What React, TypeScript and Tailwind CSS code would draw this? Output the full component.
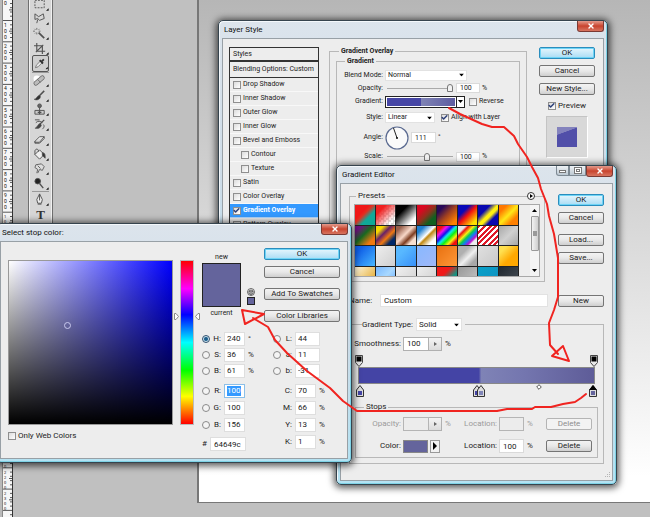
import { Check, X } from "lucide-react";
import type { ReactNode } from "react";

const tools = {
  selection: [
    <path key="m" d="M3 2.5h10v8H3z" strokeDasharray="2 1.3" />,
    <path key="l" d="M3 2l4 3 5-3 1 5-5 2-2-2-3 1zM6 8l-1 4" />,
    <g key="w">
      <path d="M7 6l6 6" strokeWidth="1.8" />
      <path d="M5 1v2M5 6v2M1 4.500h2M7 4.500h2M2.500 2l1 1M8 2L7 3M3 7l1-1" strokeWidth=".8" />
    </g>,
    <path key="c" d="M5 1v9h9M2 4h9v9M4 11l8-8" strokeWidth="1.200" />,
    <g key="e">
      <path d="M3 12l1-3 5-5 2 2-5 5z" fill="#eee" strokeWidth=".8" />
      <path d="M8 3l4 4M10 5l3-3" stroke="#333" strokeWidth="2.200" />
    </g>,
  ],
  paint: [
    <g key="h">
      <circle cx="5" cy="5" r="3.500" fill="#fff" stroke="none" />
      <path d="M4 10l7-6" stroke="#666" strokeWidth="5" strokeLinecap="round" />
      <path d="M4 10l7-6" stroke="#bbb" strokeWidth="3.400" strokeLinecap="round" />
      <path d="M6 6l3 3" strokeWidth=".7" />
    </g>,
    <g key="b">
      <path d="M13 2L7 8" strokeWidth="1.600" />
      <path d="M8 7c-3 0-3 4-6 4 3 2 7 0 7-3z" fill="#333" strokeWidth=".5" />
    </g>,
    <g key="s">
      <circle cx="8" cy="3" r="2" fill="#666" />
      <path d="M8 5v3M3 8h10v4H3z" fill="#ccc" />
      <path d="M6 10h4M8 8v4" strokeWidth="1.400" />
    </g>,
    <g key="hi">
      <path d="M13 2L8 7" strokeWidth="1.400" />
      <path d="M9 6c-3 0-3 4-6 5 3 1 6 0 7-3z" fill="#444" strokeWidth=".5" />
      <path d="M3 2h5M4 5c2-2 5-2 7 0M12 7c2 2 0 4-1 5" />
    </g>,
    <path key="er" d="M3 9l5-5h5l-5 6H3zM3 9v2h5l5-5V4" fill="#eee" />,
    <g key="bu">
      <path d="M3 7l5-5 5 5-5 5z" fill="#eee" />
      <path d="M3 7V3c1-3 4-2 4 1" />
      <path d="M11 5c3 0 3 3 3 6l-3-3z" fill="#333" />
    </g>,
    <path key="sm" d="M5 12l1-4-3-2 1-3 6-1 3 3-2 4-3-1-2 4M6 4l3 3" fill="#ddd" strokeWidth=".9" />,
    <g key="d">
      <circle cx="6" cy="4.500" r="3" fill="#222" />
      <path d="M8 7l4 5" strokeWidth="1.400" />
    </g>,
  ],
};

// background of each preset, row by row
const presets = [
  "linear-gradient(135deg,#f01818 35%,#e03020 45%,#10a898 65%)",
  "linear-gradient(135deg,#f02020 25%,transparent 80%),repeating-conic-gradient(#ddd 0 25%,#fff 0 50%) 0 0/5px 5px",
  "linear-gradient(135deg,#000 30%,#fff 80%)",
  "linear-gradient(135deg,#d80820 25%,#90301c 50%,#106020 75%)",
  "linear-gradient(135deg,#280858 20%,#a04020 50%,#ff8000 85%)",
  "linear-gradient(135deg,#0808b8 30%,#f01010 50%,#ffe000 85%)",
  "linear-gradient(135deg,#0808b0 30%,#fff010 50%,#fff010 58%,#0808b0 72%)",
  "linear-gradient(135deg,#ff7800 20%,#ffe818 50%,#ff8000 75%)",
  "linear-gradient(135deg,#701080 15%,#186820 45%,#f07810 80%)",
  "linear-gradient(135deg,#f8d800 20%,#682068 40%,#f07810 60%,#002868 80%)",
  "linear-gradient(135deg,#98604c 15%,#f8d8c8 45%,#7c3c20 65%,#f8e0d0 80%)",
  "linear-gradient(135deg,#2080d0 20%,#fff 48%,#c08810 56%,#fff 80%)",
  "linear-gradient(135deg,#f01010 15%,#f010f0 27%,#1010f0 40%,#10e8f0 50%,#10f010 62%,#f8f010 75%,#f01010 87%)",
  "linear-gradient(135deg,#e8e8e8 20%,#f01010 28%,#f8f010 42%,#10c850 53%,#1080f0 63%,#c010d0 75%,#eee 82%)",
  "repeating-linear-gradient(135deg,#e01828 0 2px,#fff 2px 4px)",
  "linear-gradient(135deg,#a8a8a8,#d0d0d0 50%,#a8a8a8)",
  "linear-gradient(135deg,#1060e8 20%,#48b8ff)",
  "linear-gradient(135deg,#eee,#d0d0d0)",
  "linear-gradient(135deg,#58b8ff 30%,#3890f8)",
  "linear-gradient(135deg,#88b8ff,#a0b8f8)",
  "linear-gradient(135deg,#e87010,#ff9838)",
  "linear-gradient(135deg,#b0b0b0 30%,#f0f0f0 55%,#a8a8a8 80%)",
  "linear-gradient(135deg,#e0e0e0,#c8c8c8)",
  "linear-gradient(135deg,#ffe050 20%,#ffa800 60%)",
  "linear-gradient(135deg,#fff8e0,#e8b850 70%)",
  "linear-gradient(135deg,#78b8ff,#a8d8ff 50%,#60a8ff)",
  "linear-gradient(135deg,#f0f0f0,#d0d0d0)",
  "linear-gradient(135deg,#eee,#ccc)",
  "linear-gradient(135deg,#f01818 35%,#189080 65%)",
  "linear-gradient(135deg,#989898,#c8c8c8)",
  "linear-gradient(135deg,#08a0c8,#1090c0)",
  "linear-gradient(135deg,#202830,#485058)",
];

const effects = [
  { name: "Drop Shadow" },
  { name: "Inner Shadow" },
  { name: "Outer Glow" },
  { name: "Inner Glow" },
  { name: "Bevel and Emboss" },
  { name: "Contour", nested: true },
  { name: "Texture", nested: true },
  { name: "Satin" },
  { name: "Color Overlay" },
  { name: "Gradient Overlay", active: true },
  { name: "Pattern Overlay" },
];

function DesktopWindow({
  title,
  place,
  controls,
  children,
}: {
  title: string;
  place: string;
  controls?: boolean;
  children: ReactNode;
}) {
  return (
    <section
      className={`absolute flex flex-col rounded-[5px] border border-[#36444e] bg-linear-to-b from-[#dce4ec] via-[#cddce8] to-[#b4e2f2] px-[3px] pb-[3px] shadow-[0_1px_7px_2px_rgba(0,0,0,0.65),inset_-1px_0_0_#7fd3e6,inset_0_-1px_0_#7fd3e6,inset_1px_1px_0_#f4f8fb] ${place}`}
    >
      <header className="flex h-[17px] shrink-0 items-start justify-between">
        <h2 className="pl-[2px] text-[8px] leading-[17px] text-[#111]">{title}</h2>
        <div className="flex">
          {controls && (
            <>
              <button
                aria-label="Minimize"
                className="flex h-[10px] w-[13px] items-end justify-center rounded-bl-[3px] border border-t-0 border-[#7d8993] bg-linear-to-b from-[#eef2f5] to-[#bcc8d2] pb-[2px]"
              >
                <span className="h-[3px] w-[7px] border border-[#777] bg-white" />
              </button>
              <button
                aria-label="Maximize"
                className="flex h-[10px] w-[17px] items-center justify-center border border-t-0 border-[#7d8993] bg-linear-to-b from-[#eef2f5] to-[#bcc8d2]"
              >
                <span className="flex h-[7px] w-2 items-center justify-center border border-[#777] bg-white">
                  <span className="h-[3px] w-1 border border-[#777]" />
                </span>
              </button>
            </>
          )}
          <button
            aria-label="Close"
            className="flex h-[11px] w-[27px] items-center justify-center rounded-b-[3px] border border-t-0 border-[#7b3a34] bg-linear-to-b from-[#e39a8c] via-[#c8432e] to-[#d77460] text-white"
          >
            <X size={8} strokeWidth={4} />
          </button>
        </div>
      </header>
      <div className="min-h-0 flex-1 overflow-hidden border border-[#98a0a6] bg-[#ededed]">{children}</div>
    </section>
  );
}

function PushButton({ children, primary, disabled }: { children: ReactNode; primary?: boolean; disabled?: boolean }) {
  const tone = primary
    ? "border-[#2a8dbd] bg-linear-to-b from-[#e6f6fd] to-[#a9dcf4] shadow-[inset_0_0_0_1px_#6fd4f6]"
    : disabled
      ? "border-[#b4b4b4] bg-[#f3f3f3] text-[#8d8d8d]"
      : "border-[#757575] bg-linear-to-b from-[#f3f3f3] via-[#e8e8e8] to-[#cfcfcf]";
  return (
    <button disabled={disabled} className={`h-3 w-full rounded-[2px] border text-center text-[8px] leading-[10px] ${tone}`}>
      {children}
    </button>
  );
}

function Tick({ label, on, className = "" }: { label: string; on?: boolean; className?: string }) {
  return (
    <label className={`flex items-center gap-[2px] whitespace-nowrap ${className}`}>
      <span className="relative flex">
        <input
          type="checkbox"
          defaultChecked={on}
          className="peer size-2 appearance-none border border-[#8f8f8f] bg-linear-to-br from-[#dcdcdc] to-white"
        />
        <Check
          size={7}
          strokeWidth={5}
          className="pointer-events-none absolute top-0 left-0 hidden text-[#2c3f78] peer-checked:block"
        />
      </span>
      {label}
    </label>
  );
}

function Drop({ label, value, className }: { label: string; value: string; className: string }) {
  return (
    <span className={`relative flex ${className}`}>
      <select aria-label={label} className="w-full appearance-none border border-[#e2e2e2] bg-white pl-[2px]">
        <option>{value}</option>
      </select>
      <svg viewBox="0 0 5 3" className="pointer-events-none absolute top-1/2 right-[3px] h-[3px] w-[5px] -translate-y-1/2">
        <path d="M0 0h5L2.500 3z" />
      </svg>
    </span>
  );
}

function Field({ label, value, className, disabled }: { label: string; value: string; className: string; disabled?: boolean }) {
  return (
    <input
      aria-label={label}
      defaultValue={value}
      disabled={disabled}
      className={`border border-[#dadada] bg-white pl-[3px] disabled:border-[#b5b5b5] disabled:bg-[#ececec] ${className}`}
    />
  );
}

function Slider({ label, value }: { label: string; value: number }) {
  return (
    <input
      type="range"
      aria-label={label}
      defaultValue={value}
      className="ml-[2px] h-2 w-[66px] appearance-none bg-[linear-gradient(#aaa,#aaa)] bg-[length:100%_1px] bg-center bg-no-repeat [&::-webkit-slider-thumb]:h-2 [&::-webkit-slider-thumb]:w-[6px] [&::-webkit-slider-thumb]:appearance-none [&::-webkit-slider-thumb]:rounded-t-[3px] [&::-webkit-slider-thumb]:border [&::-webkit-slider-thumb]:border-[#777] [&::-webkit-slider-thumb]:bg-[#f2f2f2]"
    />
  );
}

function Row({ label, className, children }: { label: string; className: string; children: ReactNode }) {
  return (
    <div className={`flex items-center ${className}`}>
      <span className="mr-[2px] w-[46px] shrink-0 text-right">{label}</span>
      {children}
    </div>
  );
}

function Ruler() {
  const marks = Array.from({ length: 25 }, (_, i) => i);
  return (
    <svg className="h-full w-[13px] shrink-0 bg-[#f6f6f6]" fontFamily="Roboto, sans-serif">
      <path d="M0 0h2v600H0z" fill="#b9b9b9" />
      <path d="M2.500 0v600" stroke="#888" />
      <path d="M12.500 0v600" stroke="#333" />
      {marks.map((i) => {
        const y = i * 21.3 - 0.8;
        const digits = i < 24 ? String(i * 100).split("") : [];
        const long = digits.length > 3;
        return (
          <g key={i}>
            <path
              d={`M3 ${y}h9M10 ${y + 4.3}h2M10 ${y + 8.5}h2M9 ${y + 10.7}h3M10 ${y + 12.8}h2M10 ${y + 17}h2`}
              stroke="#444"
              strokeWidth=".9"
            />
            {digits.map((d, n) => (
              <text key={n} x="4" y={y + 6 + n * (long ? 5 : 6)} fontSize={long ? 4 : 5} fill="#111">
                {d}
              </text>
            ))}
          </g>
        );
      })}
    </svg>
  );
}

function Tool({ children, active }: { children: ReactNode; active?: boolean }) {
  return (
    <button
      aria-label="Tool"
      className={`flex min-h-0 w-full flex-1 items-center justify-center ${active ? "rounded-[2px] border border-[#555] bg-[#cfcfcf]" : ""}`}
    >
      <svg viewBox="0 0 18 14" className="h-[13px] w-[17px]" fill="none" stroke="#505050">
        {children}
        <path d="M17.500 11.500v2h-2z" fill="#111" stroke="#111" strokeWidth=".5" />
      </svg>
    </button>
  );
}

function Toolbar() {
  return (
    <nav
      aria-label="Tools"
      className="flex w-[25px] shrink-0 flex-col self-start border-x border-b border-[#6f6f6f] bg-[#d6d6d6] px-[3px] pb-5 shadow-[inset_1px_0_0_#f0f0f0,inset_-1px_0_0_#f0f0f0]"
    >
      <div className="-mt-[3px] flex h-[75px] shrink-0 flex-col">
        {tools.selection.map((icon, i) => (
          <Tool key={i} active={i === 4}>
            {icon}
          </Tool>
        ))}
      </div>
      <hr className="border-[#999]" />
      <div className="flex h-[118px] shrink-0 flex-col">
        {tools.paint.map((icon, i) => (
          <Tool key={i}>{icon}</Tool>
        ))}
      </div>
      <hr className="border-[#999]" />
      <div className="flex h-[31px] shrink-0 flex-col">
        <Tool>
          <path d="M8 1v7M8 1L5 7l1 4h4l1-4zM6 12h4" fill="#eee" />
        </Tool>
        <button aria-label="Type tool" className="h-4 font-['Liberation_Serif',serif] text-[13px] leading-4 font-bold text-[#333]">
          T
        </button>
      </div>
    </nav>
  );
}

function LayerStyle() {
  return (
    <DesktopWindow title="Layer Style" place="top-5 left-[218px] h-[320px] w-[390px]">
      <div className="flex pt-2 pr-2 pl-[6px] text-[7px] leading-[9px]">
        <div className="w-[90px] shrink-0 border border-[#333]">
          <h3 className="h-[14px] border-b-2 border-[#333] pl-[3px] leading-[13px]">Styles</h3>
          <h3 className="h-4 border-b border-[#333] pl-[3px] leading-[15px]">Blending Options: Custom</h3>
          {effects.map((e) => (
            <Tick
              key={e.name}
              label={e.name}
              on={e.active}
              className={`h-[14px] border-b border-white/60 ${e.nested ? "pl-[11px]" : "pl-[3px]"} ${e.active ? "bg-[#3399ff] font-bold text-white" : ""}`}
            />
          ))}
        </div>
        <fieldset className="ml-[10px] h-[280px] min-w-0 flex-1 border border-[#b8b8b8] px-[6px] pt-[2px]">
          <legend className="ml-[3px] px-[2px] text-[7px] leading-2 font-bold">Gradient Overlay</legend>
          <fieldset className="h-[260px] min-w-0 border border-[#b8b8b8] pt-1">
            <legend className="ml-2 px-[2px] text-[7px] leading-2 font-bold">Gradient</legend>
            <div className="flex flex-col gap-px">
              <Row label="Blend Mode:" className="h-3">
                <Drop label="Blend mode" value="Normal" className="w-[82px]" />
              </Row>
              <Row label="Opacity:" className="h-3">
                <Slider label="Opacity" value={100} />
                <Field label="Opacity percent" value="100" className="mr-[2px] ml-[3px] h-[10px] w-6" />%
              </Row>
              <Row label="Gradient:" className="h-[13px]">
                <button aria-label="Edit gradient" className="flex h-3 w-[72px] border border-[#222] bg-white p-px">
                  <span className="h-full w-full bg-[linear-gradient(90deg,#4646a5_50%,#7f83b5_50%,#5d5ca0)]" />
                </button>
                <button aria-label="Gradient list" className="flex h-3 w-2 items-center justify-center border border-l-0 border-[#222] bg-white">
                  <svg viewBox="0 0 5 3" className="h-[3px] w-[5px]">
                    <path d="M0 0h5L2.500 3z" />
                  </svg>
                </button>
                <Tick label="Reverse" className="ml-1" />
              </Row>
              <Row label="Style:" className="mt-[2px] h-[13px]">
                <Drop label="Style" value="Linear" className="w-[50px]" />
                <Tick label="Align with Layer" on className="ml-[6px]" />
              </Row>
              <Row label="Angle:" className="h-[25px]">
                <svg viewBox="0 0 24 24" className="size-6" fill="none">
                  <circle cx="12" cy="12" r="11" fill="#fafafa" stroke="#5a6a90" strokeWidth="1.200" />
                  <path d="M12 12L8.500 2" stroke="#222" />
                  <circle cx="12" cy="12" r="1" fill="#111" />
                </svg>
                <Field label="Angle" value="111" className="mr-[2px] ml-[2px] h-[11px] w-[25px]" />°
              </Row>
              <Row label="Scale:" className="h-[11px]">
                <Slider label="Scale" value={62} />
                <Field label="Scale percent" value="100" className="mr-[2px] ml-[3px] h-[10px] w-6" />%
              </Row>
            </div>
          </fieldset>
        </fieldset>
        <div className="ml-3 flex w-14 shrink-0 flex-col items-center gap-[6px]">
          <PushButton primary>OK</PushButton>
          <PushButton>Cancel</PushButton>
          <PushButton>New Style...</PushButton>
          <Tick label="Preview" on className="text-[8px]" />
          <div className="flex size-[42px] items-center justify-center border border-[#c4c4c4] border-r-white border-b-white bg-[#d8d8d8]">
            <span className="size-5 bg-[linear-gradient(160deg,#8483bd_28%,#514fa9_30%)]" />
          </div>
        </div>
      </div>
    </DesktopWindow>
  );
}

function OpacityStop() {
  return (
    <svg viewBox="0 0 8 12" className="h-3 w-2">
      <path d="M.5.5h7v7L4 11.500.5 7.500z" fill="#e8e8e8" stroke="#444" />
      <path d="M1.500 1.500h5v5h-5z" fill="#000" />
    </svg>
  );
}

function ColorStop({ at, fill, selected }: { at: number; fill: string; selected?: boolean }) {
  return (
    <svg viewBox="0 0 8 12" className="absolute top-px h-3 w-2 -translate-x-1/2" style={{ left: `${at}%` }}>
      <path d="M.5 5L4 .5 7.500 5v6.500h-7z" fill="#ddd" stroke="#333" />
      {selected && <path d="M0 5L4 0l4 5z" />}
      <path d="M2 6h4v4H2z" fill={fill} />
    </svg>
  );
}

function MiniArrow() {
  return (
    <button
      aria-label="Open slider"
      className="mr-[3px] flex h-[14px] w-[13px] items-center justify-center border border-l-0 border-[#b0b0b0] bg-linear-to-b from-[#f4f4f4] to-[#dcdcdc]"
    >
      <svg viewBox="0 0 3 4" className="h-1 w-[3px]">
        <path d="M0 0l3 2-3 2z" fill="#666" />
      </svg>
    </button>
  );
}

function StopRow({ label, disabled, value, children }: { label: string; disabled?: boolean; value: string; children: ReactNode }) {
  return (
    <div className={`flex h-[14px] items-center pr-[5px] ${disabled ? "text-[#9b9b9b]" : ""}`}>
      <span className="mr-[2px] w-[45px] text-right">{label}</span>
      <div className="flex w-[50px] items-center">{children}</div>
      <span className="mr-[2px] w-11 text-right">Location:</span>
      <Field label={`${label} location`} value={value} disabled={disabled} className="mr-[3px] h-[14px] w-[25px]" />%
      <div className="ml-auto w-[46px]">
        <PushButton disabled={disabled}>Delete</PushButton>
      </div>
    </div>
  );
}

function GradientEditor() {
  return (
    <DesktopWindow title="Gradient Editor" place="top-[165px] left-[336px] h-[320px] w-[281px]" controls>
      <div className="pl-2 text-[8px] leading-[10px]">
        <div className="flex gap-[13px] pt-2 pr-2">
          <fieldset className="relative h-[90px] min-w-0 flex-1 border border-[#b8b8b8] px-1 pt-1">
            <legend className="ml-[2px] px-[2px] leading-2">Presets</legend>
            <button
              aria-label="Preset menu"
              className="absolute -top-[8px] right-[9px] flex size-2 items-center justify-center rounded-full border border-[#333] bg-white"
            >
              <svg viewBox="0 0 3 4" className="h-1 w-[3px]">
                <path d="M0 0l3 2-3 2z" />
              </svg>
            </button>
            <div className="flex h-[73px] justify-between border border-[#a8a8a8]">
              <div className="grid w-[164px] grid-cols-8 content-start gap-px overflow-hidden bg-[#222] pr-px">
                {presets.map((background, i) => (
                  <button key={i} aria-label={`Preset ${i + 1}`} className="aspect-square" style={{ background }} />
                ))}
              </div>
              <div className="flex w-[9px] flex-col items-center justify-between bg-[#f4f4f4] py-1">
                <svg viewBox="0 0 5 3" className="h-[3px] w-[5px]">
                  <path d="M0 3h5L2.500 0z" />
                </svg>
                <div className="mb-[15px] flex h-[35px] w-2 items-center justify-center rounded-[1px] border border-[#999] bg-linear-to-r from-[#f3f3f3] to-[#cfcfcf]">
                  <span className="h-[5px] w-1 bg-[#999]" />
                </div>
                <svg viewBox="0 0 5 3" className="h-[3px] w-[5px]">
                  <path d="M0 0h5L2.500 3z" />
                </svg>
              </div>
            </div>
          </fieldset>
          <div className="flex w-[46px] shrink-0 flex-col gap-[6px] pt-[2px]">
            <PushButton primary>OK</PushButton>
            <PushButton>Cancel</PushButton>
            <div className="mt-1">
              <PushButton>Load...</PushButton>
            </div>
            <PushButton>Save...</PushButton>
          </div>
        </div>
        <div className="mt-3 flex h-[13px] items-center pr-2">
          <label htmlFor="gradient-name" className="w-[31px] shrink-0">
            Name:
          </label>
          <input id="gradient-name" defaultValue="Custom" className="mr-[10px] h-[13px] min-w-0 flex-1 border border-[#e2e2e2] bg-white pl-[3px]" />
          <div className="w-[46px] shrink-0">
            <PushButton>New</PushButton>
          </div>
        </div>
        <fieldset className="mt-[11px] mr-2 min-w-0 border border-[#b8b8b8] pt-[6px] pb-[5px]">
          <legend className="ml-3 flex items-center gap-[3px] pr-[3px]">
            Gradient Type:
            <Drop label="Gradient type" value="Solid" className="h-[13px] w-[46px]" />
          </legend>
          <div className="flex h-[13px] items-center">
            <label htmlFor="smoothness" className="mr-[2px] w-[51px] text-right">
              Smoothness:
            </label>
            <input id="smoothness" defaultValue="100" className="h-[14px] w-[26px] border border-[#b0b0b0] bg-white pl-[3px]" />
            <MiniArrow />%
          </div>
          <div className="mx-[8px] mt-[5px]">
            <div className="-mx-[3px] flex justify-between">
              <OpacityStop />
              <OpacityStop />
            </div>
            <div className="h-[17px] border border-[#888] bg-[linear-gradient(90deg,#4444a5_51%,#7f83b6_52%,#7476af_70%,#5e5c98)]" />
            <div className="relative h-[19px]">
              <ColorStop at={1} fill="#4444a5" />
              <ColorStop at={50} fill="#4444a5" />
              <ColorStop at={52} fill="#8085b8" />
              <ColorStop at={99} fill="#64649c" selected />
              <svg viewBox="0 0 6 6" className="absolute left-3/4 h-[6px] w-[6px]">
                <path d="M3 .7L5.300 3 3 5.300.7 3z" fill="#fff" stroke="#444" strokeWidth=".9" />
              </svg>
            </div>
          </div>
          <fieldset className="mx-[5px] min-w-0 border border-[#b8b8b8] pt-[6px] pb-1">
            <legend className="ml-2 px-[2px] leading-2">Stops</legend>
            <div className="flex flex-col gap-2">
              <StopRow label="Opacity:" value="" disabled>
                <Field label="Stop opacity" value="" disabled className="h-[14px] w-[26px]" />
                <MiniArrow />%
              </StopRow>
              <StopRow label="Color:" value="100">
                <button aria-label="Stop color" className="h-[13px] w-[25px] border border-[#888] bg-[#64649c]" />
                <button aria-label="Color menu" className="ml-[2px] flex h-[13px] w-[10px] items-center justify-center border border-[#999] bg-[#f2f2f2]">
                  <svg viewBox="0 0 4 8" className="h-2 w-1">
                    <path d="M0 0l4 4-4 4z" />
                  </svg>
                </button>
              </StopRow>
            </div>
          </fieldset>
        </fieldset>
        <svg viewBox="0 0 6 6" className="mt-[8px] mr-px ml-auto size-[6px]" fill="#b5b5b5">
          <path d="M4 0h1v1H4zM2 2h1v1H2zM4 2h1v1H4zM0 4h1v1H0zM2 4h1v1H2zM4 4h1v1H4z" />
        </svg>
      </div>
    </DesktopWindow>
  );
}

type ChannelProps = {
  label: string;
  value: string;
  unit?: string;
  radio?: boolean;
  checked?: boolean;
  marked?: boolean;
  wide?: boolean;
};

function Channel({ label, value, unit = "", radio, checked, marked, wide }: ChannelProps) {
  const id = `channel-${label}-${value}`;
  return (
    <div className="flex h-[14px] items-center">
      {radio ? (
        <input
          type="radio"
          name="channel"
          aria-label={label}
          defaultChecked={checked}
          className="size-2 shrink-0 appearance-none rounded-full border border-[#8a8a8a] bg-[#f4f4f4] checked:border-[#31506e] checked:bg-[radial-gradient(#1c5f8c_35%,#cfe6f2_60%)]"
        />
      ) : (
        <span className="w-2" />
      )}
      <label htmlFor={id} className="mr-[3px] w-[11px] text-right">
        {label}:
      </label>
      <span
        className={`flex h-[14px] items-center border bg-white px-[2px] ${marked ? "border-[#8bbfe8]" : "border-[#dedede]"} ${wide ? "w-[25px]" : "w-[21px]"}`}
      >
        <input id={id} defaultValue={value} className={marked ? "w-[14px] bg-[#3399ff] text-white" : "w-full min-w-0"} />
      </span>
      <span className="pl-[3px]">{unit}</span>
    </div>
  );
}

function ColorPicker() {
  return (
    <DesktopWindow title="Select stop color:" place="top-[223px] -left-1 h-[240px] w-[356px]">
      <div className="flex pl-[7px] text-[8px] leading-[10px]">
        <div className="w-[165px] pt-[18px]">
          <div className="relative h-[165px] border border-[#999] bg-[linear-gradient(to_top,#000,transparent),linear-gradient(to_right,#fff,#00f)]">
            <span className="absolute top-[61px] left-[55px] size-[7px] rounded-full border border-[#c9c9ee]" />
          </div>
          <Tick label="Only Web Colors" className="mt-[6px]" />
        </div>
        <div className="mt-[18px] flex h-[165px] items-center pl-px">
          <svg viewBox="0 0 5 7" className="mb-[53px] h-[7px] w-[5px]">
            <path d="M.5.5h1.500L4.500 3.500 2 6.500H.5z" fill="#fff" stroke="#888" />
          </svg>
          <div className="mx-px h-full w-[14px] border border-[#bbb] bg-[linear-gradient(#f00,#f0f_17%,#00f_33%,#0ff_50%,#0f0_67%,#ff0_83%,#f00)]" />
          <svg viewBox="0 0 5 7" className="mb-[53px] h-[7px] w-[5px]">
            <path d="M4.500.5H3L.5 3.500 3 6.500h1.500z" fill="#fff" stroke="#888" />
          </svg>
        </div>
        <div className="flex-1 pt-[6px] pr-[7px] pl-[2px]">
          <div className="flex">
            <div className="w-[39px] pt-1 text-center text-[7px]">
              new
              <div className="my-px h-11 border border-[#222] bg-[#64649c]" />
              current
            </div>
            <div className="ml-[6px] flex w-2 flex-col pt-[40px]">
              <svg viewBox="0 0 8 8" className="size-2" fill="#eee" stroke="#444" strokeWidth=".8">
                <circle cx="4" cy="4" r="3.500" />
                <path d="M2 3l2-1 2 1v2.500L4 6.500l-2-1zM4 4v2.500M2 3l2 1 2-1" />
              </svg>
              <span className="mt-px size-2 border border-[#222] bg-[#64649c]" />
            </div>
            <div className="ml-auto flex w-[76px] flex-col gap-[6px]">
              <PushButton primary>OK</PushButton>
              <PushButton>Cancel</PushButton>
              <div className="my-1">
                <PushButton>Add To Swatches</PushButton>
              </div>
              <PushButton>Color Libraries</PushButton>
            </div>
          </div>
          <div className="mt-[10px] flex">
            <div className="w-[71px]">
              <div className="flex flex-col gap-[2px]">
                <Channel label="H" value="240" unit="°" radio checked />
                <Channel label="S" value="36" unit="%" radio />
                <Channel label="B" value="61" unit="%" radio />
              </div>
              <div className="mt-[6px] flex flex-col gap-[3px]">
                <Channel label="R" value="100" radio marked />
                <Channel label="G" value="100" radio />
                <Channel label="B" value="156" radio />
              </div>
              <div className="mt-[5px] flex h-[14px] items-center gap-[3px]">
                <label htmlFor="hex">#</label>
                <input id="hex" defaultValue="64649c" className="h-[14px] w-9 border border-[#dedede] bg-white pl-[3px]" />
              </div>
            </div>
            <div>
              <div className="flex flex-col gap-[2px]">
                <Channel label="L" value="44" radio wide />
                <Channel label="a" value="11" radio wide />
                <Channel label="b" value="-31" radio wide />
              </div>
              <div className="mt-[6px] flex flex-col gap-[3px]">
                <Channel label="C" value="70" unit="%" />
                <Channel label="M" value="66" unit="%" />
                <Channel label="Y" value="13" unit="%" />
                <Channel label="K" value="1" unit="%" />
              </div>
            </div>
          </div>
        </div>
      </div>
    </DesktopWindow>
  );
}

// Hand drawn arrows that walk from the gradient swatch to the stop color
function Annotations() {
  return (
    <svg
      viewBox="0 0 650 517"
      className="pointer-events-none absolute top-0 left-0 h-[517px] w-[650px]"
      fill="none"
      stroke="#f02420"
      strokeWidth="2"
      strokeLinejoin="round"
      strokeLinecap="round"
    >
      <path d="M449 108L460 114 471 119 482 124 492 127 504 127 514 136 518 144 527 157 532 167 538 178 541 189 547 204 549 216 554 234 558 258 558 297 554 310 549 323 550 345 558 354M552 356L563 346 569 361z" />
      <path d="M586 394L581 398 575 402 563 404 551 407 535 407 532 409 507 409 497 411H357L343 401 330 388 307 371 287 353 275 340 268 327 253 318M242 310L264 314 245 324z" />
    </svg>
  );
}

export default function App() {
  return (
    <main className="relative flex h-screen w-full overflow-hidden bg-[#c0c0c0] font-[Roboto,sans-serif] text-[#222]">
      <Ruler />
      <div className="w-[15px] shrink-0" />
      <Toolbar />
      <div className="w-36 shrink-0" />
      <div className="mb-[14px] flex-1 border-b border-l-2 border-[#777] bg-linear-to-b from-[#b6b6b6] to-white to-95%" />
      <LayerStyle />
      <GradientEditor />
      <ColorPicker />
      <Annotations />
    </main>
  );
}
